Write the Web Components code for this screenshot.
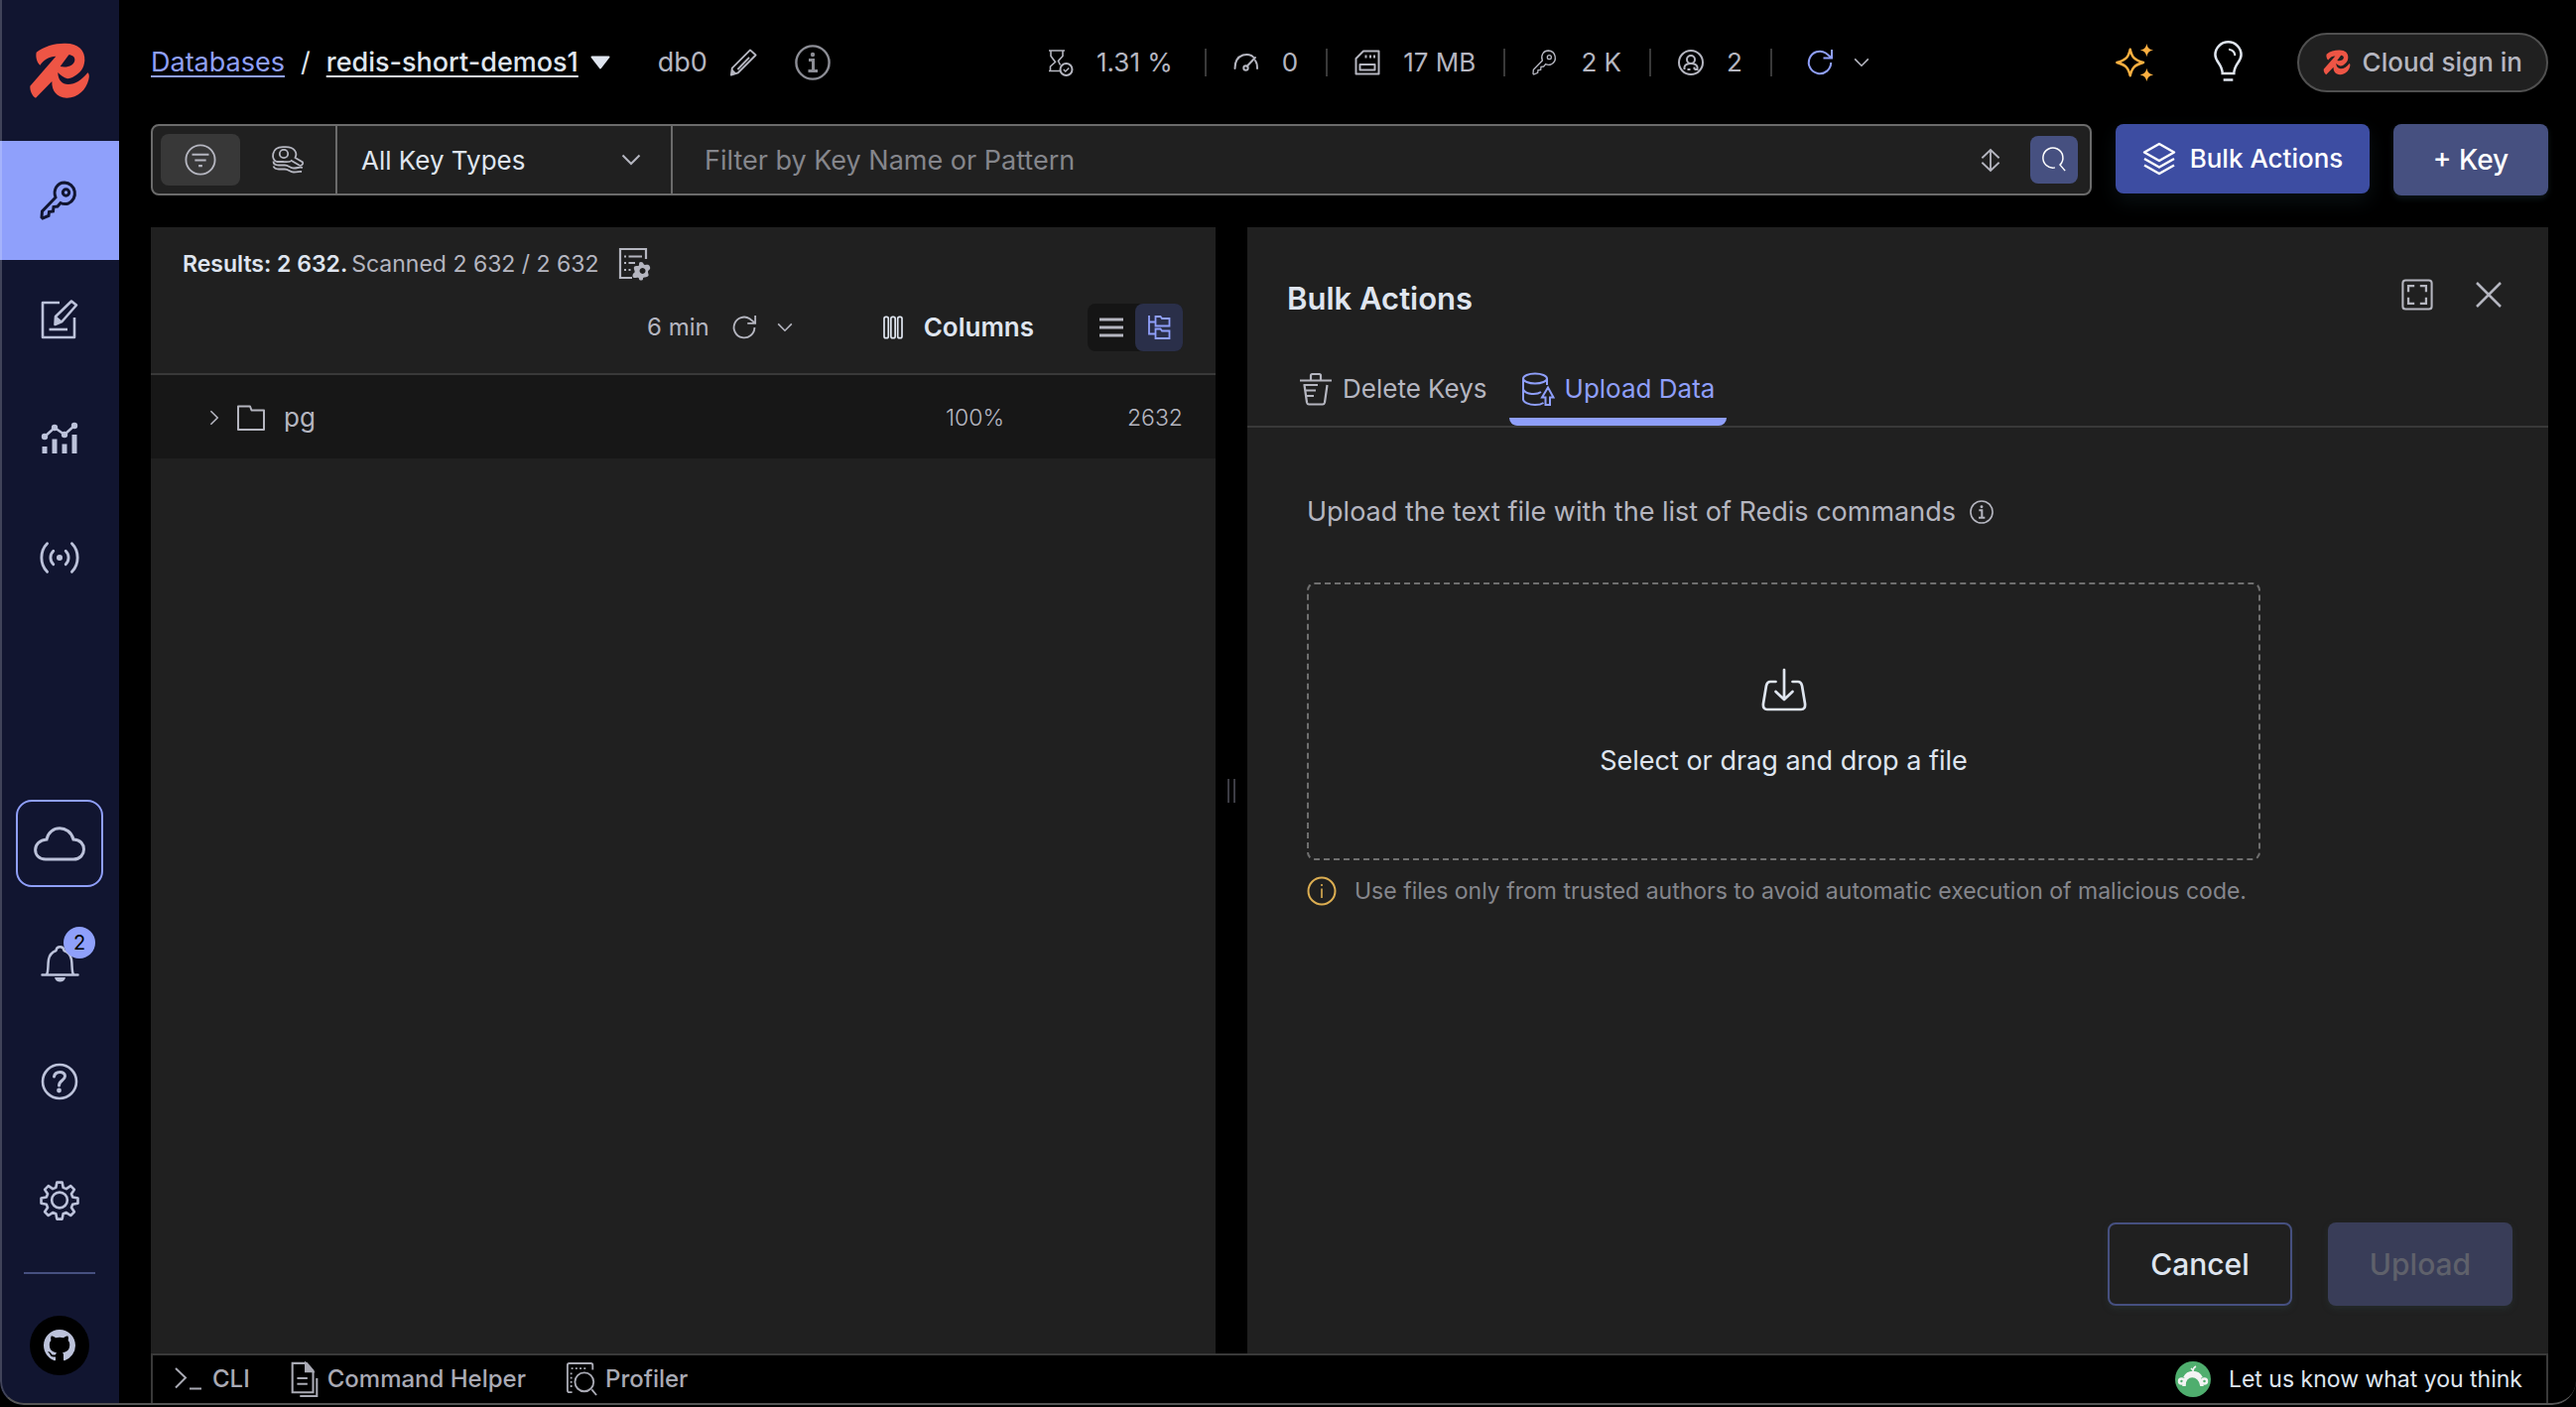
<!DOCTYPE html>
<html lang="en">
<head>
<meta charset="utf-8">
<meta name="viewport" content="width=device-width, initial-scale=1">
<title>Redis Insight</title>
<style>
  :root {
    --panel: #202020;
    --row: #171717;
    --line: #393939;
    --text: #b5b6c0;
    --bright: #dfe5ef;
    --muted: #85868c;
    --accent: #8f9ffa;
    --nav: #111530;
  }
  html, body { height: 100%; }
  body { margin: 0; background: #000; color: var(--text); font: 26px/32px Inter, "Liberation Sans", sans-serif; }
</style>
</head>
<body>
<ri-app></ri-app>

<script>
const LOGO = '<path fill="#ee5545" fill-rule="evenodd" d="M50 65C72 47 108 37 138 38C176 38 198 58 196 90C194 114 182 128 165 137C159 141 151 144 144 145C132 141 123 135 115 126C115 149 128 162 146 162C168 162 186 150 205 127C211 131 210 141 208 148C200 180 174 204 141 203C112 202 96 182 97 153L48 203C38 198 30 182 31 167L109 77C88 77 73 88 61 104C52 96 47 79 50 65ZM148 73L122 108C143 113 164 105 166 89C167 80 159 73 148 73Z"/>';
const GEAR = 'M17.500 3h5l1 5 3 1.200 4.200-2.800 3.500 3.500-2.800 4.200 1.200 3 5 1v5l-5 1-1.200 3 2.800 4.200-3.500 3.500-4.200-2.800-3 1.200-1 5h-5l-1-5-3-1.200-4.200 2.800-3.500-3.500 2.800-4.200-1.200-3-5-1v-5l5-1 1.200-3-2.800-4.200 3.500-3.500 4.200 2.800 3-1.200z';
const KEY = 'M26 3a11 11 0 0 1 4 21c-3 1-6 .5-8-.5l-3 3.500-4 .5-.5 4.500-4 .5-.5 4-6 2.500-1-1 .5-6L17 18C14 10 19 3 26 3Z';
const ICONS = {
  logo: ['0 0 240 240', LOGO],
  mark: ['28 34 184 174', LOGO],
  key: ['0 0 42 42', `<path d="${KEY}"/><circle cx="27.500" cy="13" r="3"/>`],
  keybold: ['0 0 42 42', `<g stroke-width="3"><path d="${KEY}"/><circle cx="27.500" cy="13" r="3.200"/></g>`],
  edit: ['0 0 40 40', '<g stroke-width="2.600" stroke-linejoin="round"><path d="M20 3H3v35h32V18"/><path d="M9.500 30H28"/><path d="M32 1.500l5 4L22.500 22l-7 3 .5-8z"/></g><path fill="currentColor" stroke="none" d="M16 16l7 6-8 3.500z"/>'],
  chart: ['0 0 40 38', '<g stroke-width="2.500"><path d="M5 17L15 8l10 7L35 6" fill="none"/></g><g fill="currentColor" stroke="none"><circle cx="5" cy="17" r="3.200"/><circle cx="15" cy="8" r="3.200"/><circle cx="25" cy="15" r="3.200"/><circle cx="35" cy="6" r="3.200"/><path d="M2.500 27h5v7h-5zM12.500 19.500h5V34h-5zM22.500 24.500h5V34h-5zM32.500 15h5v19h-5z"/></g>'],
  pubsub: ['0 0 44 44', '<g stroke-width="3" stroke-linecap="round"><path d="M9 7c-8 8-8 22 0 30M35 7c8 8 8 22 0 30M15.500 15c-4 4-4 10 0 14M28.500 15c4 4 4 10 0 14"/></g><circle cx="22" cy="22" r="3.200" fill="currentColor" stroke="none"/>'],
  cloud: ['0 0 54 40', '<path stroke-width="3" d="M14 16C17 1 37 1 41 16c14 0 14 20 0 20H13C-1 36-1 17 14 16Z"/>'],
  bell: ['0 0 40 40', '<path stroke-width="2.500" stroke-linecap="round" stroke-linejoin="round" d="M2.500 32.500h36M7 32c2-3 1-9 2-15 1-6 5-8 7.500-9 .5-5 7.500-5 8 0 3 1 6.500 3 7.500 9 1 6 0 12 2 15"/><path fill="currentColor" stroke="none" d="M15 35h11c-1 6-10 6-11 0Z"/>'],
  help: ['0 0 40 40', '<g stroke-width="2.600"><circle cx="20" cy="20" r="17"/><path stroke-width="3" stroke-linecap="round" d="M14.500 15c1-6 11-6 11-.5 0 4.500-6 4-6 9.500"/></g><circle cx="19.500" cy="29" r="2.400" fill="currentColor" stroke="none"/>'],
  gear: ['0 0 40 40', `<path stroke-width="2.500" stroke-linejoin="round" transform="translate(0 -.5)" d="${GEAR}"/><circle cx="20" cy="19.500" r="7.500" stroke-width="2.500"/>`],
  github: ['0 0 16 16', '<path fill="currentColor" stroke="none" d="M8 0C3.580 0 0 3.580 0 8c0 3.540 2.290 6.530 5.470 7.590.4.070.55-.17.55-.38 0-.19-.01-.82-.01-1.490-2.010.37-2.530-.49-2.690-.94-.09-.23-.48-.94-.82-1.130-.28-.15-.68-.52-.01-.53.63-.01 1.080.58 1.230.82.72 1.210 1.870.87 2.330.66.07-.52.28-.87.51-1.070-1.780-.2-3.640-.89-3.640-3.950 0-.87.31-1.590.82-2.150-.08-.2-.36-1.020.08-2.120 0 0 .67-.21 2.200.82.64-.18 1.320-.27 2-.27s1.360.09 2 .27c1.530-1.040 2.200-.82 2.200-.82.44 1.100.16 1.920.08 2.120.51.56.82 1.270.82 2.150 0 3.070-1.870 3.750-3.650 3.950.29.25.54.73.54 1.480 0 1.070-.01 1.930-.01 2.200 0 .21.15.46.55.38A8.010 8.010 0 0 0 16 8c0-4.420-3.580-8-8-8Z"/>'],
  pencil: ['0 0 30 30', '<path stroke-linejoin="round" d="M22.500 1.500l6 5.500L9.500 26 2 28.500l1-7.500zM21.500 9.500L9 22.500"/><path fill="currentColor" stroke="none" d="M3 22l5 5-6.500 2z"/>'],
  info: ['0 0 36 36', '<circle cx="18" cy="18" r="16.600" stroke-width="2.400"/><path stroke-width="3" d="M14 15.500h4.500V26M13.500 26.500h9.500"/><circle cx="18" cy="10" r="2.200" fill="currentColor" stroke="none"/>'],
  warn: ['0 0 30 30', '<circle cx="15" cy="15" r="13.500" stroke-width="2"/><path stroke-width="1.600" d="M15 12.500V22M15 8v2"/>'],
  caret: ['0 0 20 14', '<path fill="currentColor" stroke="currentColor" stroke-linejoin="round" d="M1.500 1.500h17L10 12.500z"/>'],
  chevron: ['0 0 20 12', '<path d="M1.500 1.500L10 10l8.500-8.500"/>'],
  hourglass: ['0 0 28 28', '<path stroke-width="1.600" d="M2 2h16M4 2.500v5l4.500 6L3.500 18v4.500M16 2.500v5l-4.500 5 2 4M2 22.500h11"/><circle cx="19.500" cy="21" r="6"/><path stroke-width="1.500" d="M16.800 21l2 2 3.500-3.500"/>'],
  gauge: ['0 0 28 28', '<path stroke-linecap="round" d="M2.500 20C2.500 4 18 4 21 8.500M25 20c0-3-.5-6-2-8M14.500 18L23 9"/><circle cx="13.500" cy="19.500" r="2.200"/>'],
  memory: ['0 0 28 28', '<path stroke-linejoin="round" d="M2.500 10L10 2.500h15.500v23h-23zM6.500 16h15v5.500h-15zM12.500 6.500v3M17 6.500v3M21 6.500v3"/>'],
  user: ['0 0 28 28', '<circle cx="14" cy="14" r="12"/><circle cx="14" cy="11" r="4"/><path d="M7.500 21v-2.500c1-3 4-3.500 6.500-3.500s5.500.5 6.500 3.500V21h-3M10.500 21h3M17.500 21v-2.500"/>'],
  refresh: ['0 0 28 28', '<path d="M25.200 14A11.200 11.200 0 1 1 20 4.500l5.500 4.500M26 1v8.500h-8.500"/>'],
  sparkle: ['0 0 42 42', '<path stroke-width="2.600" stroke-linejoin="round" d="M16.500 7c2 9 5 11.500 14 14-9 2.500-12 5-14 14-2-9-5-11.500-14-14 9-2.500 12-5 14-14Z"/><path fill="currentColor" stroke="none" d="M34 1c1 4.500 2.500 6 7 7-4.500 1-6 2.500-7 7-1-4.500-2.500-6-7-7 4.500-1 6-2.500 7-7ZM34 27c1 4.500 2.500 6 7 7-4.500 1-6 2.500-7 7-1-4.500-2.500-6-7-7 4.500-1 6-2.500 7-7Z"/>'],
  bulb: ['0 0 30 42', '<path stroke-width="2.600" d="M9 33c0-10-7.500-12-7.500-19.500a13.500 13.500 0 0 1 27 0C28.500 21 21 23 21 33ZM10 39.500h10"/><path stroke-width="2.200" stroke-linecap="round" d="M16.500 8c3 .5 5 2.500 5.500 5.500"/>'],
  filter: ['0 0 34 34', '<circle cx="17" cy="17" r="15.500"/><path d="M8 11.500h18M11 17.500h12M15 23.500h4" stroke-width="2.200"/>'],
  search2: ['0 0 34 28', '<g stroke-width="1.800"><circle cx="13" cy="8" r="4.200"/><path d="M20 15.500c-2.500 1-6 .5-8 .5H6C0 14.500 0 1.200 12 1.200h3c9 0 12 6 9.500 10.800l7.500 4.500c1 2-1.500 4-3.500 3L20 14.500"/><path d="M2.500 15.500c0 3 2.500 4 5.500 4h6c4 0 5 3 9 3 4.500 0 5-1.500 9-.5M2.500 20.500c1 2.500 3 3 5.500 3h6c4 0 5 3 9 3 4.500 0 5-1 8-.5"/></g>'],
  updown: ['0 0 22 26', '<path d="M11 1.500v23M1.500 10.500L11 1.500l9.500 9M1.500 15.500l9.500 9 9.500-9"/>'],
  search: ['0 0 28 28', '<path stroke-width="1.600" d="M15 22.500A10.800 10.800 0 1 1 20.500 19.500L26 26"/>'],
  layers: ['0 0 34 34', '<g stroke-width="2.500" stroke-linejoin="round"><path d="M17 2l15 8.500L17 19 2 10.500z"/><path d="M2 17l15 8.500L32 17M2 23.500L17 32l15-8.500"/></g>'],
  listcog: ['0 0 34 34', '<path d="M28 12V2H2v29h12M10.500 9.500H24M10.500 16H17M6 9.500h2M6 16h2M6 23h2M10.500 23h2" stroke-width="2.200"/><g fill="currentColor" stroke="none"><path fill-rule="evenodd" d="M23 15c3 0 2 3 4 3s4-1 5 2-2 3-2 5 2 4-1 5-4 0-4 2-4 2-4 0-3-1-5-1-2-4 0-5-1-4 0-6 5 0 5-2 0-3 2-3Zm1.500 6a3 3 0 1 0 .1 0Z"/></g>'],
  columns: ['0 0 24 28', '<rect x="1.500" y="1.500" width="5" height="25" rx="2"/><rect x="9.500" y="1.500" width="5" height="25" rx="2"/><rect x="17.500" y="1.500" width="5" height="25" rx="2"/>'],
  list: ['0 0 24 20', '<path stroke-width="3" d="M0 2h24M0 10h24M0 18h24"/>'],
  tree: ['0 0 24 26', '<path stroke-width="1.800" d="M2 1v18.500h6M2 7.500h6M8.500 2h5l1.500 2h7.500v7.500h-14zM8.500 14.500h5l1.500 2h7.500v7.500h-14z"/>'],
  folder: ['0 0 30 28', '<path stroke-linejoin="round" d="M2 2.500h12l1.500 4H28V26H2z"/>'],
  expand: ['0 0 34 34', '<rect x="1.500" y="1.500" width="31" height="31" rx="3" stroke-width="2.200"/><path stroke-width="2.400" d="M7.500 14V7.500H14M20 7.500h6.500V14M26.500 20v6.500H20M14 26.500H7.500V20"/>'],
  close: ['0 0 28 28', '<path stroke-width="2.500" d="M2 2l24 24M26 2L2 26"/>'],
  trash: ['0 0 34 34', '<path d="M1 8.500h32M12 8V3.500Q12 2 13.500 2h7Q22 2 22 3.500V8M5.500 13l2.500 17.500q.5 2 2 2h14q1.500 0 2-2L28.500 13M4.500 13H19M6.500 18.500H17M7.500 24H15" stroke-width="2.200"/>'],
  dbup: ['0 0 34 34', '<ellipse cx="14" cy="6.500" rx="12" ry="5"/><path d="M2 6.500v21c0 3 6 5.500 12 5.500 4 0 7-1 8.500-2M26 6.500V13M2 17.500c3 5.500 14 5.500 18 2.500M27 15.500l-6 10h3.500V33H29v-7.500h3.500z"/>'],
  download: ['0 0 46 44', '<g stroke-width="2.700" stroke-linecap="round" stroke-linejoin="round"><path d="M14.500 14H9c-3 0-3.500 2-4 4L2 36c-.5 4 1 6 4 6h34c3 0 4.500-2 4-6l-3-18c-.5-2-1-4-4-4h-5.500"/><path d="M23 2v29M14.500 24l8.500 8 8.500-8"/></g>'],
  cli: ['0 0 30 26', '<path d="M2 2l10 9.500L2 21.500M16 22.500h12"/>'],
  helper: ['0 0 30 38', '<path d="M2 2h15l7 8v23H2zM7 18h11M7 24h11M28 18v19H10" stroke-width="2.200"/><path fill="currentColor" d="M16 2v9h8z"/>'],
  profiler: ['0 0 34 38', '<path d="M7 33H4c-1.500 0-2-1-2-2V4c0-1.500 1-2 2-2h23c1.500 0 2 1 2 2v5M28 30l5 6"/><circle cx="20" cy="22" r="10"/><path stroke-dasharray="2 2.500" d="M6 7.500h18M6 12v16"/>'],
  monkey: ['0 0 36 36', '<circle cx="18" cy="18" r="18" fill="#4fae6e" stroke="none"/><path stroke="#f3f3f3" stroke-width="3.500" d="M9 25c-1-14 17-14 18 0"/><path stroke="#f3f3f3" stroke-width="5" d="M10.500 17c3-6.500 12-6.500 15 0"/><path stroke="#f3f3f3" stroke-width="1.500" d="M18 10c0-2 1-4 3-5M18 9l-2-2"/><circle cx="6.500" cy="20" r="2.500" stroke="#f3f3f3" stroke-width="2.500"/><circle cx="29.500" cy="20" r="2.500" stroke="#f3f3f3" stroke-width="2.500"/>']
};

/* Base class: each component supplies its own styles and markup. */
class Base extends HTMLElement {
  connectedCallback() {
    if (this.shadowRoot) return;
    const t = document.createElement('template');
    t.innerHTML = `<style>
      *, *::before, *::after { box-sizing: border-box; }
      button, input, select { font: inherit; color: inherit; background: none; border: 0; padding: 0; margin: 0; border-radius: 0; outline: 0; }
      button { display: inline-flex; align-items: center; justify-content: center; cursor: pointer; white-space: nowrap; }
      a { color: inherit; }
      ${this.css()}</style>${this.html()}`;
    this.attachShadow({ mode: 'open' }).append(t.content.cloneNode(true));
  }
  css() { return ':host{display:block}'; }
  html() { return '<slot></slot>'; }
}

customElements.define('ri-icon', class extends Base {
  css() {
    return `:host { display: inline-flex; flex: none; width: ${this.getAttribute('w')}px; height: ${this.getAttribute('h') || this.getAttribute('w')}px; }
      svg { width: 100%; height: 100%; fill: none; stroke: currentColor; stroke-width: 2; overflow: visible; }`;
  }
  html() {
    const [box, body] = ICONS[this.getAttribute('name')];
    const filled = body === LOGO ? ' style="stroke:none"' : '';
    return `<svg viewBox="${box}" aria-hidden="true"${filled}>${body}</svg>`;
  }
});

customElements.define('ri-nav-item', class extends Base {
  css() {
    return `:host { display: flex; flex: none; height: 120px; position: relative; color: #bcc2da; }
      button { flex: 1; }
      :host([active]) { background: #8fa0fb; color: var(--nav); }
      :host([boxed]) button { flex: none; width: 88px; height: 88px; margin: auto; border: 2px solid var(--accent); border-radius: 16px; }
      .badge { position: absolute; top: 24px; right: 24px; width: 32px; height: 32px; border-radius: 50%; background: #8fa0fb; color: #000; font-size: 20px; line-height: 32px; text-align: center; }`;
  }
  html() {
    const badge = this.getAttribute('badge');
    return `<button type="button" aria-label="${this.getAttribute('label')}"><slot></slot></button>${badge ? `<span class="badge">${badge}</span>` : ''}`;
  }
});

customElements.define('ri-sidebar', class extends Base {
  css() {
    return `:host { display: flex; flex-direction: column; width: 120px; flex: none; background: var(--nav); }
      .logo { height: 142px; display: flex; align-items: center; justify-content: center; }
      .end { margin-top: auto; display: flex; flex-direction: column; }
      hr { width: 72px; height: 2px; border: 0; background: #465080; margin: 12px auto 42px; }
      .gh { width: 60px; height: 60px; border-radius: 50%; background: #000; color: #bcc2da; margin: 0 auto 30px; display: flex; align-items: center; justify-content: center; }`;
  }
  html() {
    return `<div class="logo"><ri-icon name="logo" w="80"></ri-icon></div>
      <nav>
        <ri-nav-item label="Browser" active><ri-icon name="keybold" w="42"></ri-icon></ri-nav-item>
        <ri-nav-item label="Workbench"><ri-icon name="edit" w="40"></ri-icon></ri-nav-item>
        <ri-nav-item label="Analysis Tools"><ri-icon name="chart" w="40" h="38"></ri-icon></ri-nav-item>
        <ri-nav-item label="Pub/Sub"><ri-icon name="pubsub" w="42"></ri-icon></ri-nav-item>
      </nav>
      <div class="end">
        <ri-nav-item label="Redis Cloud" boxed><ri-icon name="cloud" w="54" h="40"></ri-icon></ri-nav-item>
        <ri-nav-item label="Notifications" badge="2"><ri-icon name="bell" w="40"></ri-icon></ri-nav-item>
        <ri-nav-item label="Help"><ri-icon name="help" w="40"></ri-icon></ri-nav-item>
        <ri-nav-item label="Settings"><ri-icon name="gear" w="42"></ri-icon></ri-nav-item>
        <hr><a class="gh" href="#github" aria-label="GitHub"><ri-icon name="github" w="32"></ri-icon></a>
      </div>`;
  }
});

customElements.define('ri-stat', class extends Base {
  css() {
    return `:host { display: flex; align-items: center; height: 28px; gap: 22px; padding: 0 28px 0 26px; border-right: 2px solid var(--line); white-space: nowrap; }
      :host(:first-child) { padding: 0 32px 0 0; }`;
  }
  html() { return `<ri-icon name="${this.getAttribute('icon')}" w="28"></ri-icon><span><slot></slot></span>`; }
});

customElements.define('ri-header', class extends Base {
  css() {
    return `:host { display: flex; align-items: center; height: 125px; flex: none; white-space: nowrap; }
      .crumbs { display: flex; align-items: center; width: 37%; min-width: 903px; font-size: 27px; }
      .crumbs a:first-child { color: var(--accent); }
      .crumbs a { text-underline-offset: 4px; text-decoration-thickness: 2px; }
      .name { color: var(--bright); font-weight: 500; }
      .sep { color: var(--bright); margin: 0 16px; }
      .caret { color: var(--bright); margin: 0 48px 0 12px; }
      .edit { margin: 0 38px 0 22px; }
      .info { color: #8c8d95; }
      .stats { display: flex; align-items: center; }
      .auto { color: var(--accent); margin: 0 20px 0 34px; }
      .right { display: flex; align-items: center; margin-left: auto; }
      .spark { color: #fbb041; margin-right: 60px; }
      .bulb { color: var(--bright); margin-right: 55px; }
      .sign { height: 60px; padding: 0 24px; gap: 12px; border: 2px solid #505050; border-radius: 30px; background: var(--panel); font-weight: 500; }`;
  }
  html() {
    return `<div class="crumbs"><a href="#databases">Databases</a><span class="sep">/</span><a class="name" href="#db">redis-short-demos1</a>
        <button class="caret" type="button" aria-label="Switch database"><ri-icon name="caret" w="20" h="14"></ri-icon></button>
        <span>db0</span><button class="edit" type="button" aria-label="Edit index"><ri-icon name="pencil" w="28"></ri-icon></button>
        <button class="info" type="button" aria-label="Database info"><ri-icon name="info" w="36"></ri-icon></button></div>
      <div class="stats"><ri-stat icon="hourglass">1.31 %</ri-stat><ri-stat icon="gauge">0</ri-stat><ri-stat icon="memory">17 MB</ri-stat><ri-stat icon="key">2 K</ri-stat><ri-stat icon="user">2</ri-stat>
        <button class="auto" type="button" aria-label="Refresh"><ri-icon name="refresh" w="28"></ri-icon></button>
        <button type="button" aria-label="Auto refresh"><ri-icon name="chevron" w="16" h="10"></ri-icon></button></div>
      <div class="right"><button class="spark" type="button" aria-label="Copilot"><ri-icon name="sparkle" w="40"></ri-icon></button>
        <button class="bulb" type="button" aria-label="Insights"><ri-icon name="bulb" w="29" h="41"></ri-icon></button>
        <button class="sign" type="button"><ri-icon name="mark" w="28" h="26"></ri-icon><span>Cloud sign in</span></button></div>`;
  }
});

customElements.define('ri-search-bar', class extends Base {
  css() {
    return `:host { display: flex; flex: none; height: 72px; gap: 24px; align-items: flex-start; }
      form { flex: 1; display: flex; height: 72px; border: 2px solid #6b6b6b; border-radius: 8px; background: var(--panel); align-items: stretch; }
      .modes { display: flex; align-items: center; width: 186px; padding: 0 8px; gap: 8px; border-right: 2px solid #6b6b6b; }
      .modes button { width: 80px; height: 52px; border-radius: 8px; }
      .modes .on { background: #383838; }
      .types { display: flex; align-items: center; width: 338px; border-right: 2px solid #6b6b6b; padding-right: 30px; }
      select { appearance: none; flex: 1; min-width: 0; height: 100%; padding: 2px 0 0 24px; color: var(--bright); }
      input { flex: 1; min-width: 0; padding: 2px 32px 0; font-size: 27px; }
      input::placeholder { color: var(--muted); opacity: 1; }
      .sort { padding: 0 30px; }
      .go { align-self: center; width: 48px; height: 48px; margin-right: 12px; border-radius: 8px; background: #465080; color: #fff; }
      .bulk { height: 70px; min-width: 256px; padding: 0 24px; gap: 14px; border-radius: 8px; background: #3d4da2; color: #fff; font-weight: 500; box-shadow: 0 8px 20px #1d323855; }
      .add { height: 72px; width: 156px; border-radius: 8px; background: #465080; color: #fff; font-size: 28px; font-weight: 500; box-shadow: 0 3px 6px #1d323877; }`;
  }
  html() {
    return `<form onsubmit="return false"><div class="modes"><button class="on" type="button" aria-label="Filter by name"><ri-icon name="filter" w="32"></ri-icon></button>
        <button type="button" aria-label="Search by values"><ri-icon name="search2" w="34" h="28"></ri-icon></button></div>
        <label class="types"><select aria-label="Key type"><option>All Key Types</option></select><ri-icon name="chevron" w="20" h="12"></ri-icon></label>
        <input type="text" aria-label="Filter" placeholder="Filter by Key Name or Pattern">
        <button class="sort" type="button" aria-label="History"><ri-icon name="updown" w="20" h="25"></ri-icon></button>
        <button class="go" type="submit" aria-label="Search"><ri-icon name="search" w="26"></ri-icon></button></form>
      <button class="bulk" type="button"><ri-icon name="layers" w="34"></ri-icon><span>Bulk Actions</span></button>
      <button class="add" type="button">+ Key</button>`;
  }
});

customElements.define('ri-key-panel', class extends Base {
  css() {
    return `:host { display: flex; flex-direction: column; background: var(--panel); min-width: 0; }
      header { padding: 20px 33px 22px 32px; border-bottom: 2px solid var(--line); font-size: 24px; height: 149px; display: flex; flex-direction: column; justify-content: space-between; }
      .line { display: flex; align-items: center; }
      .top { height: 34px; gap: 4px; font-size: 23px; }
      .top b { font-weight: 600; color: var(--bright); }
      .top button { margin-left: 15px; }
      .tools { justify-content: flex-end; height: 48px; }
      .ref { margin: 0 20px 0 22px; }
      .cols { margin: 0 54px 0 90px; gap: 20px; color: var(--bright); font-weight: 600; font-size: 26px; }
      .view { display: flex; background: #151515; border-radius: 8px; }
      .view button { width: 48px; height: 48px; border-radius: 8px; }
      .view .on { background: #2a2f49; color: var(--accent); }
      .row { display: flex; align-items: center; height: 84px; background: var(--row); padding: 2px 33px 0 56px; font-size: 23px; }
      .row ri-icon { margin-right: 18px; }
      .row .tw { margin-right: 14px; transform: rotate(-90deg); }
      .row .pct { margin-left: auto; font-weight: 300; }
      .row .num { width: 180px; text-align: right; font-weight: 300; }
      .name { font-size: 26px; }`;
  }
  html() {
    return `<header><div class="line top"><b>Results: 2 632.</b><span>Scanned 2 632 / 2 632</span><button type="button" aria-label="Tree settings"><ri-icon name="listcog" w="34"></ri-icon></button></div>
      <div class="line tools"><span>6 min</span><button class="ref" type="button" aria-label="Refresh keys"><ri-icon name="refresh" w="26"></ri-icon></button>
        <button type="button" aria-label="Auto refresh"><ri-icon name="chevron" w="16" h="10"></ri-icon></button>
        <button class="cols" type="button"><ri-icon name="columns" w="22" h="24"></ri-icon><span>Columns</span></button>
        <div class="view"><button type="button" aria-label="List view"><ri-icon name="list" w="24" h="20"></ri-icon></button><button class="on" type="button" aria-label="Tree view"><ri-icon name="tree" w="24" h="26"></ri-icon></button></div></div></header>
      <div role="tree"><div class="row" role="treeitem"><ri-icon class="tw" name="chevron" w="16" h="10"></ri-icon><ri-icon name="folder" w="30" h="28"></ri-icon><span class="name">pg</span><span class="pct">100%</span><span class="num">2632</span></div></div>`;
  }
});

customElements.define('ri-tab', class extends Base {
  css() {
    return `:host { display: flex; }
      button { align-items: flex-start; gap: 10px; padding: 2px 12px 0; height: 56px; }
      span { line-height: 34px; }
      :host([active]) button { color: var(--accent); background: linear-gradient(var(--accent), var(--accent)) bottom / 100% 8px no-repeat; border-radius: 0 0 8px 8px; }`;
  }
  html() { return `<button type="button" role="tab"><ri-icon name="${this.getAttribute('icon')}" w="34"></ri-icon><span><slot></slot></span></button>`; }
});

customElements.define('ri-bulk-panel', class extends Base {
  css() {
    return `:host { display: flex; flex-direction: column; background: var(--panel); min-width: 0; }
      header { display: flex; align-items: flex-start; padding: 0 46px 0 40px; margin-top: 50px; height: 44px; }
      h2 { margin: 0 auto 0 0; font-size: 31px; line-height: 44px; font-weight: 600; color: var(--bright); }
      header button { height: 36px; }
      header button + button { margin-left: 42px; }
      .tabs { display: flex; gap: 10px; padding: 50px 40px 0; border-bottom: 2px solid var(--line); }
      .body { padding: 68px 60px 0; width: 1081px; max-width: 100%; }
      .lead { margin: 0; display: flex; align-items: center; gap: 14px; height: 34px; font-size: 27px; }
      .drop { display: flex; flex-direction: column; align-items: center; justify-content: center; gap: 34px; height: 280px; padding-top: 2px; margin: 54px 0 14px; border: 2px dashed #6f6f6f; border-radius: 8px; color: var(--bright); font-size: 27px; cursor: pointer; }
      .drop input { position: absolute; width: 1px; height: 1px; opacity: 0; }
      .note { display: flex; align-items: center; gap: 18px; margin: 0; height: 34px; font-size: 23px; color: var(--muted); white-space: nowrap; }
      .note ri-icon { color: #dcae52; }
      footer { margin-top: auto; display: flex; justify-content: flex-end; gap: 36px; padding: 0 36px 48px; font-weight: 500; font-size: 30px; }
      footer button { width: 186px; height: 84px; border-radius: 8px; box-shadow: 0 3px 6px #2c3d3d66; }
      .cancel { border: 2px solid #465080; color: var(--bright); }
      .upload { background: #393d58; color: #5f616b; }`;
  }
  html() {
    return `<header><h2>Bulk Actions</h2><button type="button" aria-label="Full screen"><ri-icon name="expand" w="32"></ri-icon></button><button type="button" aria-label="Close"><ri-icon name="close" w="28"></ri-icon></button></header>
      <div class="tabs" role="tablist"><ri-tab icon="trash">Delete Keys</ri-tab><ri-tab icon="dbup" active>Upload Data</ri-tab></div>
      <div class="body"><p class="lead"><span>Upload the text file with the list of Redis commands</span><ri-icon name="info" w="24"></ri-icon></p>
        <label class="drop"><input type="file"><ri-icon name="download" w="46" h="44"></ri-icon><span>Select or drag and drop a file</span></label>
        <p class="note"><ri-icon name="warn" w="30"></ri-icon><span>Use files only from trusted authors to avoid automatic execution of malicious code.</span></p></div>
      <footer><button class="cancel" type="button">Cancel</button><button class="upload" type="button" disabled>Upload</button></footer>`;
  }
});

customElements.define('ri-bottom-bar', class extends Base {
  css() {
    return `:host { display: flex; align-items: center; flex: none; height: 52px; border: 2px solid var(--line); background: #000; padding: 0 24px 0 20px; font-size: 24px; white-space: nowrap; }
      button { font-weight: 500; margin-right: 40px; gap: 8px; color: #a9aab4; }
      a { margin-left: auto; display: flex; align-items: center; gap: 18px; color: var(--bright); text-decoration: none; font-size: 23px; }`;
  }
  html() {
    return `<button type="button"><ri-icon name="cli" w="32" h="26"></ri-icon><span>CLI</span></button>
      <button type="button"><ri-icon name="helper" w="30" h="36"></ri-icon><span>Command Helper</span></button>
      <button type="button"><ri-icon name="profiler" w="32" h="36"></ri-icon><span>Profiler</span></button>
      <a href="#survey"><ri-icon name="monkey" w="36"></ri-icon><span>Let us know what you think</span></a>`;
  }
});

customElements.define('ri-app', class extends Base {
  css() {
    return `:host { display: flex; position: relative; height: calc(100vh - 2px); min-height: 1100px; overflow: hidden; border-radius: 0 0 24px 24px; }
      :host::after { content: ""; position: absolute; inset: 0; border: solid #565656; border-width: 0 0 2px 0; border-left: 2px solid #ffffff33; border-radius: 0 0 24px 24px; pointer-events: none; }
      main { flex: 1; min-width: 0; display: flex; flex-direction: column; padding: 0 28px 0 32px; }
      .panels { flex: 1; display: flex; margin-top: 32px; min-height: 0; }
      ri-key-panel { flex: 1073; }
      ri-bulk-panel { flex: 1311; }
      .split { flex: none; width: 32px; display: flex; align-items: center; justify-content: center; gap: 4px; }
      .split i { width: 2px; height: 24px; background: #3c3c44; }`;
  }
  html() {
    return `<ri-sidebar></ri-sidebar><main><ri-header></ri-header><ri-search-bar></ri-search-bar>
      <div class="panels"><ri-key-panel></ri-key-panel><div class="split"><i></i><i></i></div><ri-bulk-panel></ri-bulk-panel></div>
      <ri-bottom-bar></ri-bottom-bar></main>`;
  }
});
</script>
</body>
</html>
